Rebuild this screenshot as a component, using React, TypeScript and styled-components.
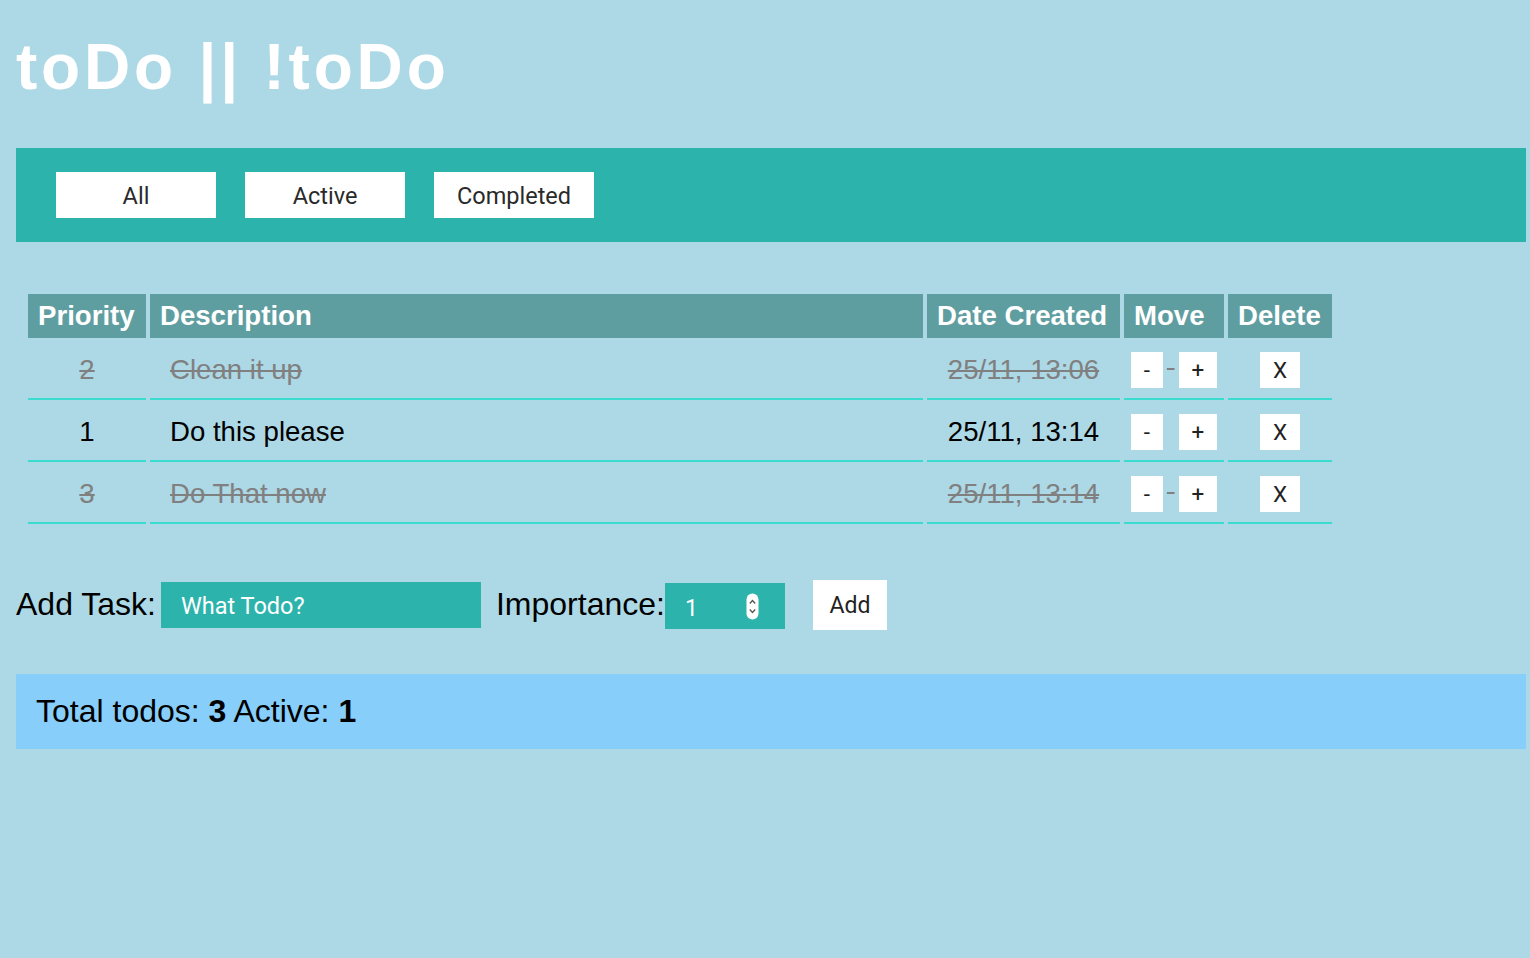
import React from "react";
import styled, { createGlobalStyle } from "styled-components";

const Global = createGlobalStyle`
  *, *::before, *::after { box-sizing: border-box; }
  html, body { margin: 0; padding: 0; background: #add8e6; }
  body { font-family: "Liberation Sans", Arial, sans-serif; }
`;

const Page = styled.div`
  padding: 35px 4px 40px 16px;
  min-height: 958px;
`;

const Title = styled.h1`
  margin: 0;
  font-size: 64px;
  line-height: 64px;
  font-weight: 700;
  letter-spacing: 3.8px;
  color: #ffffff;
`;

const FilterBar = styled.nav`
  margin-top: 49px;
  height: 94px;
  background: #2cb3ac;
  padding: 24px 40px;
  display: flex;
  gap: 29px;
`;

const FilterButton = styled.button`
  width: 160px;
  height: 46px;
  border: none;
  background: #ffffff;
  color: #2a2a2a;
  font-family: Roboto, "Noto Sans", sans-serif;
  font-size: 23.5px;
  padding: 2px 0 0;
  cursor: pointer;
`;

const Table = styled.table`
  margin: 48px 0 0 8px;
  width: 1312px;
  table-layout: fixed;
  border-collapse: separate;
  border-spacing: 4px;
  font-size: 27.6px;
`;

const Th = styled.th<{ $w: number }>`
  width: ${(p) => p.$w}px;
  height: 44px;
  padding: 0 10px;
  background: #5f9ea0;
  color: #ffffff;
  font-weight: 700;
  text-align: left;
  white-space: nowrap;
`;

const Td = styled.td<{ $done?: boolean; $align?: string; $pad?: number }>`
  height: 58px;
  padding: 0 0 0 ${(p) => p.$pad ?? 0}px;
  border-bottom: 2px solid #3adcd0;
  text-align: ${(p) => p.$align ?? "center"};
  color: ${(p) => (p.$done ? "#808080" : "#000000")};
  text-decoration: ${(p) => (p.$done ? "line-through" : "none")};
  text-decoration-thickness: 2px;
  white-space: nowrap;
`;

const CellButton = styled.button`
  display: inline-block;
  margin: 0 4px;
  height: 36px;
  padding: 0 13px;
  border: none;
  background: #ffffff;
  color: #222;
  font-family: Roboto, "Noto Sans", sans-serif;
  font-size: 22.5px;
  vertical-align: middle;
  cursor: pointer;
`;

const AddRow = styled.form`
  margin-top: 51px;
  display: flex;
  align-items: center;
`;

const Label = styled.label`
  font-size: 32px;
  color: #000;
`;

const TextInput = styled.input`
  margin: 1px 15px 0 5px;
  width: 320px;
  height: 46px;
  border: none;
  outline: none;
  background: #2cb3ac;
  color: #fff;
  padding: 2px 20px 0;
  font-family: Roboto, "Noto Sans", sans-serif;
  font-size: 23.5px;
  &::placeholder { color: #ffffff; opacity: 1; }
`;

const NumberBox = styled.div`
  margin: 3px 28px 0 0;
  width: 120px;
  height: 46px;
  background: #2cb3ac;
  display: flex;
  align-items: center;
  padding: 0 26px 0 20px;
`;

const NumberField = styled.input`
  flex: 1;
  min-width: 0;
  border: none;
  outline: none;
  background: transparent;
  color: #fff;
  padding: 4px 0 0;
  font-family: Roboto, "Noto Sans", sans-serif;
  font-size: 23px;
  -moz-appearance: textfield;
  &::-webkit-inner-spin-button,
  &::-webkit-outer-spin-button { -webkit-appearance: none; margin: 0; }
`;

const AddButton = styled.button`
  width: 74px;
  height: 50px;
  margin-top: 1px;
  border: none;
  background: #ffffff;
  color: #222;
  font-family: Roboto, "Noto Sans", sans-serif;
  font-size: 23px;
  padding: 0;
  cursor: pointer;
`;

const Footer = styled.footer`
  margin-top: 44px;
  height: 75px;
  background: #87cefa;
  display: flex;
  align-items: center;
  padding: 0 20px;
  font-size: 32px;
  color: #000;
`;

const Spinner = () => (
  <svg width="13" height="27" viewBox="0 0 13 27" aria-hidden>
    <rect x="0.5" y="0.5" width="12" height="26" rx="6" fill="#ffffff" />
    <path d="M3.8 10.5 L6.5 7.5 L9.2 10.5" fill="none" stroke="#555" strokeWidth="1.3" />
    <path d="M3.8 16.5 L6.5 19.5 L9.2 16.5" fill="none" stroke="#555" strokeWidth="1.3" />
  </svg>
);

const todos = [
  { p: 2, d: "Clean it up", t: "25/11, 13:06", done: true },
  { p: 1, d: "Do this please", t: "25/11, 13:14", done: false },
  { p: 3, d: "Do That now", t: "25/11, 13:14", done: true },
];

export default function App() {
  return (
    <>
      <Global />
      <Page>
        <Title>toDo || !toDo</Title>
        <FilterBar>
          <FilterButton>All</FilterButton>
          <FilterButton>Active</FilterButton>
          <FilterButton>Completed</FilterButton>
        </FilterBar>
        <Table>
          <thead>
            <tr>
              <Th $w={118}>Priority</Th>
              <Th $w={773}>Description</Th>
              <Th $w={193}>Date Created</Th>
              <Th $w={100}>Move</Th>
              <Th $w={104}>Delete</Th>
            </tr>
          </thead>
          <tbody>
            {todos.map((t, i) => (
              <tr key={i}>
                <Td $done={t.done}>{t.p}</Td>
                <Td $done={t.done} $align="left" $pad={20}>{t.d}</Td>
                <Td $done={t.done}>{t.t}</Td>
                <Td $done={t.done}>
                  <CellButton>-</CellButton> <CellButton>+</CellButton>
                </Td>
                <Td>
                  <CellButton>X</CellButton>
                </Td>
              </tr>
            ))}
          </tbody>
        </Table>
        <AddRow onSubmit={(e) => e.preventDefault()}>
          <Label>Add Task:</Label>
          <TextInput type="text" placeholder="What Todo?" />
          <Label>Importance:</Label>
          <NumberBox>
            <NumberField type="number" defaultValue={1} />
            <Spinner />
          </NumberBox>
          <AddButton type="submit">Add</AddButton>
        </AddRow>
        <Footer>
          <span>
            Total todos: <b>3</b> Active: <b>1</b>
          </span>
        </Footer>
      </Page>
    </>
  );
}
